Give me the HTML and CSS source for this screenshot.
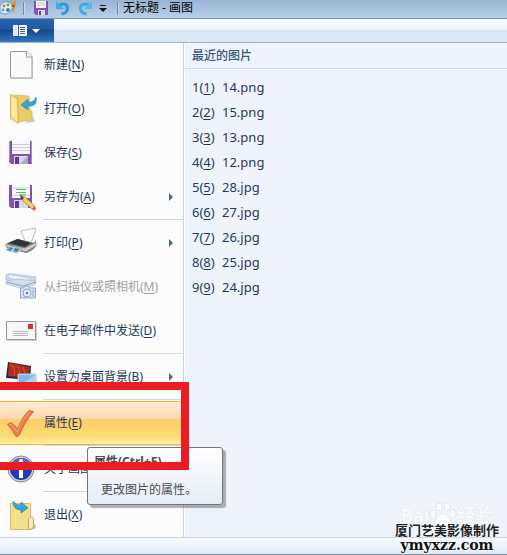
FILE: index.html
```html
<!DOCTYPE html>
<html lang="zh-CN">
<head>
<meta charset="utf-8">
<meta name="viewport" content="width=device-width, initial-scale=1">
<title>无标题 - 画图</title>
<link rel="stylesheet" href="styles.css">
</head>
<body>
<div class="window">
  <header class="titlebar">
    <svg class="app-icon" width="17" height="16" viewBox="0 0 17 16" aria-hidden="true"><path d="M0 6Q2 1 8 2Q13 3 12 9Q10 14 5 14Q2 14 0 12Z" fill="#dcedf7" stroke="#5b9dbd"/><circle cx="4" cy="6" r="1.400" fill="#e4633e"/><circle cx="8" cy="5" r="1.400" fill="#57b04e"/><circle cx="3" cy="10" r="1.400" fill="#53b355"/><circle cx="8" cy="10" r="2" fill="#3a86c8"/><path d="M11 1l1 3 1-4 1 4 1-4 1 1-1 6-2 7-1-7z" fill="#e98a28"/><path d="M12 5h3v2h-3z" fill="#a8602a"/></svg>
    <span class="divider"></span>
    <button class="quick" aria-label="保存"><svg width="14" height="14" viewBox="0 0 14 14"><path d="M0 0h14v14H2L0 12z" fill="#8553b5"/><path d="M2 0h10v7H2z" fill="#f5f5fc"/><path d="M3 2h8M3 4h8" stroke="#c5c3d8"/><path d="M4 9h7v5H4z" fill="#e1dced"/><path d="M5 10h2v4H5z" fill="#6a43a0"/></svg></button>
    <button class="quick" aria-label="撤销"><svg width="14" height="15" viewBox="0 0 14 15"><path d="M3 4Q12 1 11.500 8Q11 12 5.500 13" fill="none" stroke="#279be0" stroke-width="3"/><path d="M0 0v8h8z" fill="#35aef0"/></svg></button>
    <button class="quick" aria-label="重做"><svg width="14" height="15" viewBox="0 0 14 15"><path d="M11 4Q2 1 2.500 8Q3 12 8.500 13" fill="none" stroke="#38abe8" stroke-width="3"/><path d="M14 0v8H6z" fill="#4cbcf2"/></svg></button>
    <button class="quick quick-more" aria-label="自定义快速访问工具栏"><svg width="8" height="8" viewBox="0 0 8 8"><path d="M1 1.500h6" stroke="#222"/><path d="M0 4h8L4 8z" fill="#111"/></svg></button>
    <span class="divider"></span>
    <h1 class="title">无标题 - 画图</h1>
  </header>
  <nav class="tabs">
    <button class="file-tab" aria-label="画图菜单"><svg width="28" height="13" viewBox="0 0 28 13"><rect y="1" width="14" height="11" rx="1" fill="#fff"/><path d="M1 2h3v9H1z" fill="#d9e8f6"/><path d="M5.500 1v11" stroke="#2862ab"/><path d="M7 3.500h5M7 5.500h5M7 7.500h5M7 9.500h5" stroke="#2b66b0"/><path d="M19 5h8l-4 4z" fill="#fff"/></svg></button>
  </nav>
  <main class="panel">
    <ul class="menu">
      <li><button class="item"><span class="icon"><svg width="32" height="32" viewBox="0 0 32 32"><path d="M6 4h16l6 6v20H6z" fill="#ccc" opacity=".6"/><path d="M5.500 2.500H22l5 5v21.500H5.500z" fill="#fafafa" stroke="#999"/><path d="M21.500 2.500v5.500H27" fill="#fff" stroke="#999"/></svg></span>新建(<u>N</u>)</button></li>
      <li><button class="item"><span class="icon"><svg width="32" height="32" viewBox="0 0 32 32"><path d="M20 30l10-1-2-6z" fill="#ccc"/><path d="M9 2l15 1 1 14q3 1 2 4v5q-1 2-3 1l-10 2z" fill="#e9cc68" stroke="#d5b351" stroke-width=".7"/><path d="M5.500 1.500l7 4 1 25-8-5z" fill="#f7dc82" stroke="#cfaa48" stroke-width=".8"/><path d="M7 4l4 3 1 20-5-4z" fill="#ffebaa"/><path d="M16 12l7-6v3q6 1 8-5 2 10-8 9v4z" fill="#39a1dc" stroke="#2882b8" stroke-width=".6"/></svg></span>打开(<u>O</u>)</button></li>
      <li><button class="item"><span class="icon"><svg width="32" height="32" viewBox="0 0 32 32"><path d="M4 4h23v23H6l-2-2z" fill="#8254af"/><path d="M7 4h18v13H7z" fill="#f9f9ff"/><path d="M7 7.500h18M7 10.500h18M7 13.500h18" stroke="#ccccda"/><path d="M9 19h14v8H9z" fill="#d9d8e4"/><path d="M10 20h4v7h-4z" fill="#5d3c8e"/><path d="M15 27l8-8v8z" fill="#aaa9b9"/><path d="M4.500 4v20M26.500 4v22" stroke="#ae85d2"/></svg></span>保存(<u>S</u>)</button></li>
      <li><button class="item more"><span class="icon"><svg width="32" height="32" viewBox="0 0 32 32"><path d="M4 4h23v23H6l-2-2z" fill="#8254af"/><path d="M7 4h18v13H7z" fill="#f9f9ff"/><path d="M7 7h18M7 14h18" stroke="#ccccda"/><path d="M11 8.500h10M11 11.500h10M14 14h7" stroke="#49c349"/><path d="M9 19h14v8H9z" fill="#d9d8e4"/><path d="M10 20h4v7h-4z" fill="#5d3c8e"/><path d="M15 14l2 5 10 9 3-3-10-9z" fill="#f6cd57" stroke="#99804b" stroke-width=".7"/><path d="M15 14l2 5 2-2z" fill="#334"/><path d="M27 28l3-3 1 3-2 2z" fill="#cf675a"/></svg></span>另存为(<u>A</u>)</button></li>
      <li class="rule"></li>
      <li><button class="item more"><span class="icon"><svg width="32" height="32" viewBox="0 0 32 32"><path d="M20 14L16 4l14-3 1 1-5 14z" fill="#fbfbfb" stroke="#aaa" stroke-width=".8"/><path d="M1 17l11-5 18 4 1-4v7q-2 4-10 7L1 20z" fill="#777"/><path d="M3 16l10-4 13 4-6 4z" fill="#303336"/><path d="M1 17l19 4 11-6v4l-10 6-20-5z" fill="#c9c9c9" stroke="#666" stroke-width=".6"/><path d="M5 19l12 3-5 4-11-3z" fill="#e9f4fa" stroke="#777" stroke-width=".5"/><path d="M5 20l4 1-3 3-4-1z" fill="#2f92cf"/><path d="M10 21l5 1-3 3-4-1z" fill="#3a7fa6"/></svg></span>打印(<u>P</u>)</button></li>
      <li><button class="item" disabled><span class="icon"><svg width="32" height="32" viewBox="0 0 32 32"><path d="M1 4q3-2 7-1l23 3-1 4-12 3L1 9z" fill="#cbd7e9" stroke="#a9b9d3" stroke-width=".7"/><path d="M4 4l21 4-7 3L4 6z" fill="#f2f6fb"/><path d="M1 10l12-2 18 2v3l-12 5-18-5z" fill="#d3ddeb" stroke="#a9b8d0" stroke-width=".7"/><path d="M1 11l17 4 13-4" fill="none" stroke="#8fa5c7"/><path d="M15.500 17h3l1-2h4l1 2h6v10h-15z" fill="#d8e2ef" stroke="#93a7c8"/><circle cx="22" cy="22" r="4" fill="#eef4fa" stroke="#8ea3c4"/><circle cx="22" cy="22" r="1.500" fill="#7188ae"/><path d="M28 19v7" stroke="#96a9c7"/></svg></span>从扫描仪或照相机(<u>M</u>)</button></li>
      <li><button class="item"><span class="icon"><svg width="32" height="32" viewBox="0 0 32 32"><path d="M2 7h30v19H2z" fill="#aaa" opacity=".5"/><path d="M1.500 6.500h29v18h-29z" fill="#f7f7f7" stroke="#969696"/><path d="M23 9h5v5h-5z" fill="#d63233"/><path d="M8 16.500h15M8 18.500h15M8 20.500h15" stroke="#bbb"/></svg></span>在电子邮件中发送(<u>D</u>)</button></li>
      <li class="rule"></li>
      <li><button class="item more"><span class="icon"><svg width="32" height="32" viewBox="0 0 32 32"><path d="M3 1l23 4-1 14-24-2z" fill="#252838"/><path d="M4 2l21 4-2 11-20-2z" fill="#b62b1e"/><path d="M6 3q5 6 3 12M12 4q4 5 2 12M18 6q3 5 1 10" stroke="#d9553a" fill="none"/><path d="M13 13h18v15H13z" fill="#e9f2f8" stroke="#a6b8c8"/><path d="M14 14h16v11H14z" fill="#76b9ed"/><path d="M14 25l16-11v11z" fill="#a4d3f7"/></svg></span>设置为桌面背景(<u>B</u>)</button></li>
      <li class="rule"></li>
      <li class="anchor"><button class="item active" aria-describedby="tip"><span class="icon"><svg width="32" height="32" viewBox="0 0 32 32"><path d="M2.500 17.500l4-2 6 6Q18 9 24 3.500l4.500 1Q20 14 14.500 28l-3 2Q7 22 2.500 17.500z" fill="#ea7d4c" stroke="#cf693f"/><path d="M4 18l2-1 6 8Q17 12 25 5" fill="none" stroke="#f3a276"/></svg></span>属性(<u>E</u>)</button>
        <div class="tooltip" id="tip" role="tooltip"><strong>属性(Ctrl+E)</strong><p>更改图片的属性。</p></div>
        <div class="marker"></div>
      </li>
      <li class="rule"></li>
      <li><button class="item"><span class="icon"><svg width="32" height="32" viewBox="0 0 32 32"><circle cx="16" cy="16" r="13" fill="#d4d4d7" stroke="#858891"/><circle cx="16" cy="16" r="11" fill="#213caf"/><path d="M5 16q5-7 22-3Q25 5 16 5 6 6 5 16z" fill="#4c68d5"/><path d="M14 11h4v14h-4z" fill="#fff"/><circle cx="16" cy="8" r="2" fill="#fff"/></svg></span>关于画图(<u>T</u>)</button></li>
      <li class="rule"></li>
      <li><button class="item"><span class="icon"><svg width="32" height="32" viewBox="0 0 32 32"><path d="M26 31l5-2-2-5z" fill="#bbb"/><path d="M5.500 4.500h20v26h-20z" fill="#f4df8b" stroke="#d9b95b"/><path d="M23.500 19.500q4-3 5 0v8l-3 3h-2z" fill="#f8eab8" stroke="#c7a64c"/><path d="M8 2q3 5 8 4V3l7 6-7 5v-3Q8 11 8 2z" fill="#39a4dc" stroke="#217fb2" stroke-width=".7"/></svg></span>退出(<u>X</u>)</button></li>
    </ul>
    <section class="recent">
      <h2>最近的图片</h2>
      <ol>
        <li><a href="#"><span class="key">1(<u>1</u>)</span>14.png</a></li>
        <li><a href="#"><span class="key">2(<u>2</u>)</span>15.png</a></li>
        <li><a href="#"><span class="key">3(<u>3</u>)</span>13.png</a></li>
        <li><a href="#"><span class="key">4(<u>4</u>)</span>12.png</a></li>
        <li><a href="#"><span class="key">5(<u>5</u>)</span>28.jpg</a></li>
        <li><a href="#"><span class="key">6(<u>6</u>)</span>27.jpg</a></li>
        <li><a href="#"><span class="key">7(<u>7</u>)</span>26.jpg</a></li>
        <li><a href="#"><span class="key">8(<u>8</u>)</span>25.jpg</a></li>
        <li><a href="#"><span class="key">9(<u>9</u>)</span>24.jpg</a></li>
      </ol>
    </section>
  </main>
  <footer class="bottom"></footer>
  <div class="watermark">
    <div class="ghost"><span>Bai</span><svg width="28" height="26" viewBox="0 0 28 26" aria-hidden="true"><g fill="#fff" stroke="#dfe4ec"><ellipse cx="4" cy="12" rx="3" ry="4"/><ellipse cx="10" cy="5" rx="3" ry="4"/><ellipse cx="18" cy="5" rx="3" ry="4"/><ellipse cx="24" cy="12" rx="3" ry="4"/><path d="M14 11q4 0 6 5 4 4 2 7-2 3-8 2-6 1-8-2-2-3 2-7 2-5 6-5z"/></g></svg><span>经验</span></div>
    <p class="studio">厦门艺美影像制作</p>
    <p class="site">ymyxzz.com</p>
  </div>
</div>
</body>
</html>
```
FILE: styles.css
```css
* { box-sizing: border-box; }
body, h1, h2, p, ul, ol { margin: 0; padding: 0; }
ul, ol { list-style: none; }
body {
  font: 12px/16px "Noto Sans", "Noto Sans CJK SC", sans-serif;
  color: #1e395b;
  background: #eff4fc;
}
button {
  font: inherit;
  color: inherit;
  border: 0;
  padding: 0;
  background: none;
}
svg { display: block; flex: none; }
u { text-underline-offset: 2px; text-decoration-skip-ink: none; }
.window {
  position: relative;
  display: flex;
  flex-direction: column;
  min-height: 100vh;
}
.titlebar {
  display: flex;
  align-items: center;
  height: 19px;
  padding-bottom: 2px;
  background: linear-gradient(#98b3d3, #b8d0e9);
  border-bottom: 1px solid #7a8ea9;
}
.app-icon { margin-right: 6px; }
.divider {
  width: 2px;
  height: 13px;
  border-left: 1px solid #71879f;
  border-right: 1px solid #c6d9ec;
}
.quick { margin-left: 9px; }
.quick + .quick { margin-left: 8px; }
.quick.quick-more { margin: 0 10px 0 7px; }
.title {
  padding: 0 4px;
  font-size: 12px;
  font-weight: 400;
  line-height: 16px;
  color: #000;
}
.tabs {
  height: 24px;
  background: linear-gradient(#fbfeff, #e9f4fc 11px, #dbe6f4 11px, #dce7f5);
  border-bottom: 1px solid #a5b7cf;
}
.file-tab {
  display: flex;
  align-items: center;
  width: 54px;
  height: 23px;
  padding-left: 13px;
  background: linear-gradient(#2865ae, #205aa4 10px, #174488 11px, #2d78bd);
}
.panel {
  flex: 1;
  display: grid;
  grid-template-columns: 184px 1fr;
}
.menu {
  background: #fcfcfc;
  border-right: 1px solid #c5d3e7;
}
.item {
  position: relative;
  display: flex;
  align-items: center;
  width: 100%;
  height: 44px;
  padding-left: 5px;
  text-align: left;
  white-space: nowrap;
}
.icon { flex: none; width: 39px; }
.item:disabled { color: #a0a0a0; }
.more::after {
  content: "";
  margin: 0 10px 0 auto;
  border: 4px solid transparent;
  border-left-color: #4b6685;
  border-right-width: 0;
}
.rule {
  height: 2px;
  margin-left: 43px;
  background: #fff;
  border-top: 1px solid #cbd7e7;
}
.anchor { position: relative; }
.active {
  background: linear-gradient(#fdebd6, #fbd9ac 17px, #fecd6b 17px, #fddb72 34px, #fff0a2);
  border: solid #f4b51d;
  border-width: 1px 0;
}
.tooltip {
  position: absolute;
  z-index: 1;
  top: 46px;
  left: 87px;
  width: 136px;
  height: 58px;
  padding: 6px;
  color: #4c4c4c;
  background: linear-gradient(#fff, #e4ecf7);
  border: 1px solid #767676;
  border-radius: 3px;
  box-shadow: 3px 3px 1px rgb(0 0 0 / 30%);
}
.tooltip strong { display: block; white-space: nowrap; }
.tooltip p { padding: 12px 7px 0; white-space: nowrap; }
.marker {
  position: absolute;
  z-index: 2;
  top: -19px;
  left: 0;
  width: 189px;
  height: 88px;
  border: 8px solid #ed1c24;
  border-left: 0;
  pointer-events: none;
}
.recent {
  border-left: 1px solid #fff;
  background: #eff4fc;
}
.recent h2 {
  height: 26px;
  padding: 4px 7px;
  font-size: 12px;
  font-weight: 500;
  line-height: 17px;
  color: #3b5476;
  border-bottom: 1px solid #c9d9ed;
}
.recent ol {
  padding: 5px 7px;
  border-top: 1px solid #fff;
}
.recent a {
  display: flex;
  font-size: 13px;
  line-height: 24px;
  padding-bottom: 1px;
  color: inherit;
  text-decoration: none;
}
.key { width: 30px; }
.bottom {
  height: 18px;
  background: linear-gradient(#f7fbff, #e0e9f5);
  border-top: 1px solid #c5d3e5;
  border-bottom: 1px solid #8191aa;
}
.watermark {
  position: absolute;
  right: 7px;
  bottom: 4px;
  width: 106px;
  color: #222;
  text-align: center;
  text-shadow: 0 0 2px #fff, 0 0 2px #fff;
  white-space: nowrap;
}
.ghost {
  display: flex;
  align-items: center;
  justify-content: center;
  height: 12px;
  font-size: 18px;
  font-weight: 700;
  color: #f9fbfe;
  text-shadow: 0 0 1px #ccd4e0;
}
.studio {
  position: relative;
  font-size: 13px;
  font-weight: 700;
  line-height: 18px;
}
.site {
  font: 700 14px/12px "DejaVu Serif", serif;
  color: #111;
}
```
